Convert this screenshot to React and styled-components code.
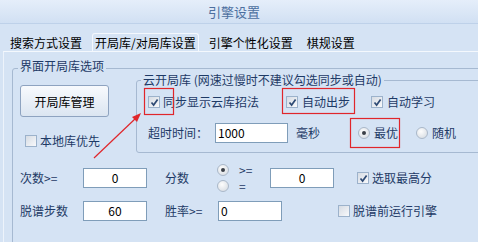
import styled, { createGlobalStyle } from "styled-components";

const Global = createGlobalStyle`
  html, body { margin: 0; padding: 0; background: #d5e3f4; }
  body {
    font-family: "Noto Sans CJK SC", "Liberation Sans", sans-serif;
    font-size: 12px;
  }
`;

const Window = styled.div`
  position: relative;
  width: 478px;
  height: 242px;
  overflow: hidden;
  background: #d5e3f4;
  display: flex;
  flex-direction: column;
`;

const TitleBar = styled.div`
  flex: none;
  height: 23px;
  border-bottom: 1px solid #bed1e9;
  background: linear-gradient(#e5eefa, #d1e0f3);
  display: flex;
  align-items: center;
  justify-content: center;
  padding-right: 10px;
  color: #4d6f9f;
  font-size: 13px;
  line-height: 23px;
`;

const TabStrip = styled.div`
  flex: none;
  height: 27px;
  display: flex;
  align-items: flex-end;
  gap: 6px;
  padding-left: 6px;
`;

const Tab = styled.div`
  height: 17px;
  line-height: 17px;
  padding: 0 ${(p) => (p.$active ? 2 : 3)}px;
  border: 1px solid ${(p) => (p.$active ? "#f4f8fd" : "transparent")};
  border-bottom: none;
  border-radius: 3px 3px 0 0;
  color: #000;
  white-space: nowrap;
`;

const Panel = styled.div`
  flex: 1;
  margin-left: 3px;
  border-top: 1px solid #f4f8fd;
  border-left: 1px solid #edf3fb;
  padding-left: 8px;
  overflow: hidden;
`;

const Group = styled.fieldset`
  flex: none;
  box-sizing: border-box;
  min-width: 0;
  margin: ${(p) => (p.$inner ? "-2px 0 0 0" : "8px 0 0 0")};
  width: ${(p) => (p.$inner ? "350px" : "480px")};
  padding: ${(p) => (p.$inner ? "9px 0 9px 11px" : "0 0 40px 7px")};
  border: 1px solid #a6b9d1;
  border-radius: 3px;
`;

const GroupTitle = styled.legend`
  line-height: 12px;
  padding: 0 2px ${(p) => (p.$inner ? 0 : 4)}px;
  margin-left: ${(p) => (p.$inner ? -7 : -2)}px;
  color: #1e3a66;
  white-space: nowrap;
`;

const TopSection = styled.div`
  display: flex;
  align-items: flex-start;
`;

const LeftColumn = styled.div`
  flex: none;
  width: 116px;
  display: flex;
  flex-direction: column;
  align-items: flex-start;
`;

const Button = styled.button`
  margin-top: 9px;
  width: 89px;
  height: 32px;
  padding: 0;
  border: 1px solid #8ea3c0;
  border-radius: 3px;
  background: linear-gradient(#f8fafd, #dbe5f1);
  font: inherit;
  color: #000;
`;

const Row = styled.div`
  display: flex;
  align-items: center;
  height: ${(p) => p.$h || 20}px;
  margin-top: ${(p) => p.$mt || 0}px;
`;

const OptionRow = styled.div`
  display: grid;
  grid-template-columns: 138px 85px auto;
  align-items: center;
  height: 14px;
`;

const Label = styled.span`
  flex: none;
  width: ${(p) => p.$w}px;
  margin-left: ${(p) => p.$ml || 0}px;
  color: #1e3a66;
  line-height: 14px;
  white-space: nowrap;
`;

const TextBox = styled.div`
  flex: none;
  box-sizing: border-box;
  width: ${(p) => p.$w}px;
  height: 20px;
  padding: 0 2px;
  border: 1px solid #7f9db9;
  background: #fff;
  color: #000;
  line-height: 18px;
  text-align: ${(p) => (p.$center ? "center" : "left")};
`;

const Option = styled.label`
  display: inline-flex;
  align-items: center;
  gap: ${(p) => p.$gap ?? 3}px;
  flex: none;
  width: ${(p) => (p.$w ? `${p.$w}px` : "auto")};
  margin-left: ${(p) => p.$ml || 0}px;
  margin-top: ${(p) => p.$mt || 0}px;
  color: #1e3a66;
  line-height: 14px;
  white-space: nowrap;
`;

const CheckBox = styled.span`
  flex: none;
  box-sizing: border-box;
  width: 12px;
  height: 12px;
  border: 1px solid #9cb2cb;
  background: linear-gradient(135deg, #d6dce4, #f8f9fb);
  display: inline-flex;
  align-items: center;
  justify-content: center;
`;

const RadioDot = styled.span`
  flex: none;
  box-sizing: border-box;
  width: 12px;
  height: 12px;
  border-radius: 50%;
  border: 1px solid #aab8c9;
  background: radial-gradient(circle at 40% 35%, #fdfdfd, #d2d8df);
  display: inline-flex;
  align-items: center;
  justify-content: center;
  &::after {
    content: "";
    display: ${(p) => (p.$on ? "block" : "none")};
    width: 4px;
    height: 4px;
    border-radius: 50%;
    background: #3a3f47;
  }
`;

const RadioStack = styled.div`
  flex: none;
  width: 53px;
  display: flex;
  flex-direction: column;
`;

const Annotations = styled.svg`
  position: absolute;
  left: 0;
  top: 0;
  pointer-events: none;
`;

function Check({ checked, children, ...rest }) {
  return (
    <Option {...rest}>
      <CheckBox>
        {checked && (
          <svg width="9" height="9" viewBox="0 0 9 9">
            <path d="M1.5 4.5 L3.6 7 L7.6 1.5" fill="none" stroke="#2e4a74" strokeWidth="1.7" />
          </svg>
        )}
      </CheckBox>
      {children}
    </Option>
  );
}

function Radio({ on, children, ...rest }) {
  return (
    <Option {...rest}>
      <RadioDot $on={on} />
      {children}
    </Option>
  );
}

export default function App() {
  return (
    <Window>
      <Global />
      <TitleBar>引擎设置</TitleBar>
      <TabStrip>
        <Tab>搜索方式设置</Tab>
        <Tab $active>开局库/对局库设置</Tab>
        <Tab>引擎个性化设置</Tab>
        <Tab>棋规设置</Tab>
      </TabStrip>
      <Panel>
        <Group>
          <GroupTitle>界面开局库选项</GroupTitle>
          <TopSection>
            <LeftColumn>
              <Button>开局库管理</Button>
              <Check $ml={5} $mt={17}>本地库优先</Check>
            </LeftColumn>
            <Group $inner>
              <GroupTitle $inner>云开局库 (网速过慢时不建议勾选同步或自动)</GroupTitle>
              <OptionRow>
                <Check checked>同步显示云库招法</Check>
                <Check checked $gap={4}>自动出步</Check>
                <Check checked $gap={4}>自动学习</Check>
              </OptionRow>
              <Row $mt={14}>
                <Label $w={67}>超时时间：</Label>
                <TextBox $w={73}>1000</TextBox>
                <Label $w={62} $ml={8}>毫秒</Label>
                <Radio on $w={58} $gap={4}>最优</Radio>
                <Radio $gap={4}>随机</Radio>
              </Row>
            </Group>
          </TopSection>
          <Row $mt={15}>
            <Label $w={63}>次数&gt;=</Label>
            <TextBox $w={64} $center>0</TextBox>
            <Label $w={52} $ml={18}>分数</Label>
            <RadioStack>
              <Radio on $gap={10}>&gt;=</Radio>
              <Radio $gap={10} $mt={2}>=</Radio>
            </RadioStack>
            <TextBox $w={64} $center>0</TextBox>
            <Check checked $ml={23}>选取最高分</Check>
          </Row>
          <Row $mt={13}>
            <Label $w={63}>脱谱步数</Label>
            <TextBox $w={64} $center>60</TextBox>
            <Label $w={53} $ml={18}>胜率&gt;=</Label>
            <TextBox $w={64}>0</TextBox>
            <Check $ml={56}>脱谱前运行引擎</Check>
          </Row>
        </Group>
      </Panel>
      <Annotations width="478" height="242" viewBox="0 0 478 242">
        <g fill="none" stroke="#e0262b" strokeWidth="1.2">
          <rect x="144.5" y="88.5" width="29" height="26" />
          <rect x="282.5" y="88.5" width="72" height="25" />
          <rect x="350.5" y="118.5" width="49" height="29" />
          <line x1="94" y1="158" x2="136" y2="118" />
        </g>
        <polygon points="141,113 132,117 137,122" fill="#e0262b" />
      </Annotations>
    </Window>
  );
}
